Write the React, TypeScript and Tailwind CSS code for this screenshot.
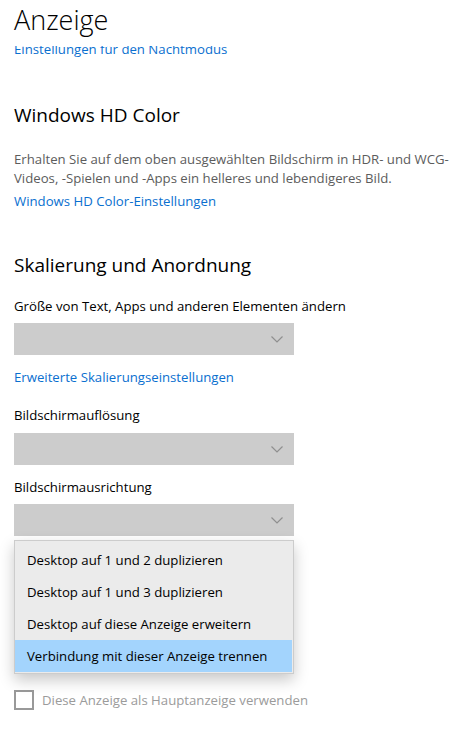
import { useState } from "react";

const font = { fontFamily: '"Open Sans", "Noto Sans", sans-serif' };

const options = [
  "Desktop auf 1 und 2 duplizieren",
  "Desktop auf 1 und 3 duplizieren",
  "Desktop auf diese Anzeige erweitern",
  "Verbindung mit dieser Anzeige trennen",
];

function Chevron() {
  return (
    <svg width="12" height="7" viewBox="0 0 12 7" fill="none" className="text-[#8f8f8f]">
      <path d="M0.5 0.5 L6 6 L11.5 0.5" stroke="currentColor" strokeWidth="1.2" />
    </svg>
  );
}

function Dropdown({ children }: { children?: React.ReactNode }) {
  return (
    <div className="relative flex h-[32px] w-[280px] items-center justify-end bg-[#cccccc] pr-[11px]">
      <Chevron />
      {children}
    </div>
  );
}

export default function App() {
  const [selected] = useState(3);

  return (
    <div
      className="h-[738px] w-[466px] overflow-hidden bg-white px-[14px] text-[13.2px] text-black"
      style={font}
    >
      {/* Kopfzeile */}
      <div className="flex h-[46px] items-start">
        <h1 className="mt-[2px] text-[27px] font-light leading-[36px]">Anzeige</h1>
      </div>

      <div className="h-[13px] overflow-hidden">
        <a className="-mt-[7px] block leading-[20px] text-[#0a6fcf]">
          Einstellungen für den Nachtmodus
        </a>
      </div>

      <h2 className="mt-[42px] text-[19px] leading-[28px]">Windows HD Color</h2>
      <p className="mt-[21px] whitespace-nowrap leading-[19px] text-[#5c5c5c]">
        Erhalten Sie auf dem oben ausgewählten Bildschirm in HDR- und WCG-
        <br />
        Videos, -Spielen und -Apps ein helleres und lebendigeres Bild.
      </p>
      <a className="mt-[3px] block leading-[20px] text-[#0a6fcf]">
        Windows HD Color-Einstellungen
      </a>

      <h2 className="mt-[40px] text-[19px] leading-[28px]">Skalierung und Anordnung</h2>
      <p className="mt-[17px] leading-[20px]">
        Größe von Text, Apps und anderen Elementen ändern
      </p>
      <div className="mt-[7px]">
        <Dropdown />
      </div>
      <a className="mt-[12px] block leading-[20px] text-[#0a6fcf]">
        Erweiterte Skalierungseinstellungen
      </a>

      <p className="mt-[18px] leading-[20px]">Bildschirmauflösung</p>
      <div className="mt-[8px]">
        <Dropdown />
      </div>

      <p className="mt-[12px] leading-[20px]">Bildschirmausrichtung</p>
      <div className="mt-[7px]">
        <Dropdown />
      </div>

      {/* Auswahlfeld unter dem geöffneten Menü */}
      <div className="mt-[105px]">
        <Dropdown>
          <ul className="absolute bottom-[-1px] left-0 z-10 w-[280px] border border-[#cccccc] bg-[#ebebeb] pb-[1px] pt-[3px] shadow-[0_6px_14px_rgba(0,0,0,0.22)]">
            {options.map((o, i) => (
              <li
                key={o}
                className={
                  "flex h-[32px] items-center whitespace-nowrap px-[12px] leading-[20px] " +
                  (i === selected ? "mr-[1px] bg-[#a3d4fd]" : "")
                }
              >
                {o}
              </li>
            ))}
          </ul>
        </Dropdown>
      </div>

      <label className="mt-[17px] flex items-center gap-[8px] text-[#9b9b9b]">
        <span className="h-[20px] w-[20px] border-2 border-[#999999]" />
        <span className="leading-[20px]">Diese Anzeige als Hauptanzeige verwenden</span>
      </label>
    </div>
  );
}
